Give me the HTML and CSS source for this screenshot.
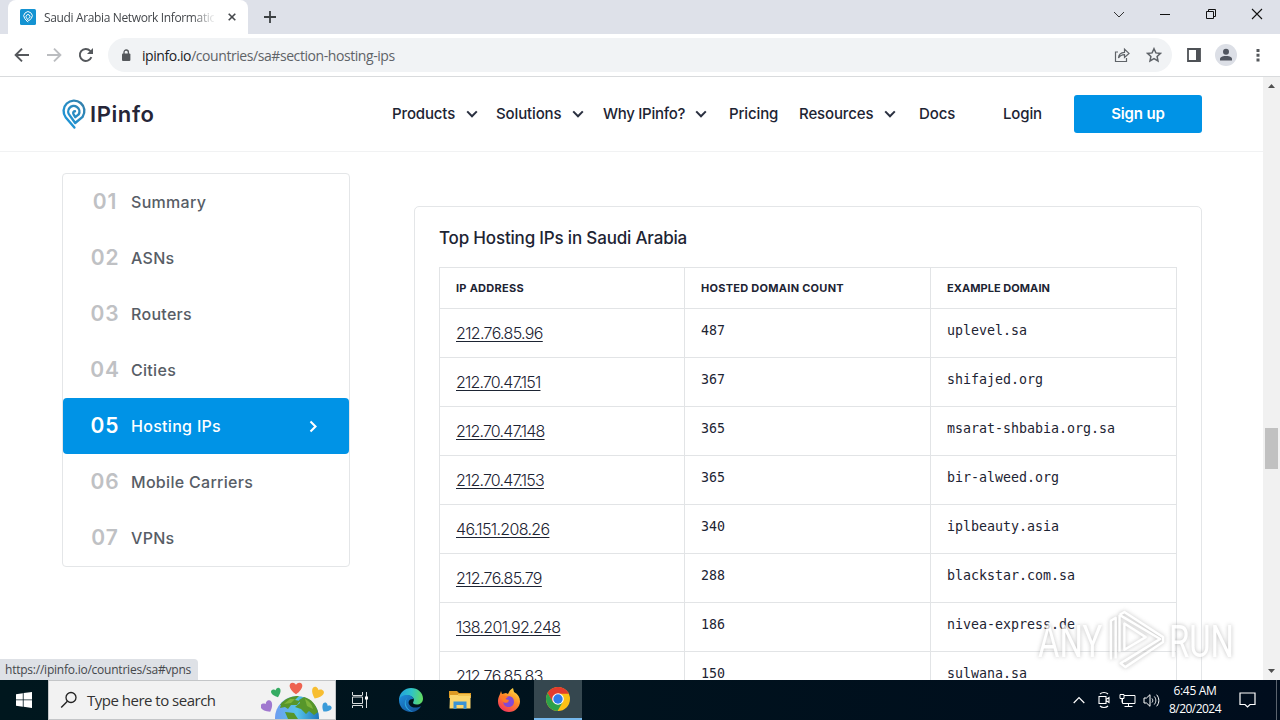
FILE: index.html
```html
<!DOCTYPE html>
<html lang="en">
<head>
    <meta charset="UTF-8">
    <meta name="viewport" content="width=device-width, initial-scale=1.0">
    <title>Saudi Arabia Network Information</title>
    <link rel="stylesheet" href="styles.css">
</head>
<body>
  <div class="tab-strip">
    <div class="tab">
      <svg class="favicon" width="16" height="16" viewBox="0 0 16 16"><rect width="16" height="16" rx="1.5" fill="#1493d2"/><path d="M8 13.2 4.8 9.6a4.2 4.2 0 1 1 6.6-.2L8.6 11.800 6.400 8.700a2 2 0 1 1 3.400-.2L8.400 9.400" fill="none" stroke="#fff" stroke-width="1"/></svg>
      <span class="tab-title">Saudi Arabia Network Information</span>
      <svg class="tab-close" width="8" height="8" viewBox="0 0 8 8"><path d="M.7.7l6.6 6.6M7.3.7L.7 7.3" stroke="#45484c" stroke-width="1.6"/></svg>
    </div>
    <svg class="new-tab" width="12" height="12" viewBox="0 0 12 12"><path d="M6 0v12M0 6h12" stroke="#3c4043" stroke-width="1.8"/></svg>
    <div class="window-buttons">
      <svg width="46" height="28" viewBox="0 0 46 28"><path d="M18 12l5 5 5-5" fill="none" stroke="#333"/></svg>
      <svg width="46" height="28" viewBox="0 0 46 28"><path d="M18 14.5h10" stroke="#111"/></svg>
      <svg width="46" height="28" viewBox="0 0 46 28"><path d="M18.5 11.5h7v7h-7zM20.5 11.5v-2h7v7h-2" fill="none" stroke="#111"/></svg>
      <svg width="46" height="28" viewBox="0 0 46 28"><path d="M18 9l10 10M28 9L18 19" stroke="#111" stroke-width="1.1"/></svg>
    </div>
  </div>

  <div class="toolbar">
    <svg class="tool-icon" width="16" height="16" viewBox="0 0 16 16"><path d="M15 8H2M8 1.6L1.6 8 8 14.4" fill="none" stroke="#55585c" stroke-width="1.9"/></svg>
    <svg class="tool-icon" width="16" height="16" viewBox="0 0 16 16"><path d="M1 8h13M8 1.6L14.4 8 8 14.4" fill="none" stroke="#bbbdc0" stroke-width="1.9"/></svg>
    <svg class="tool-icon" width="16" height="16" viewBox="0 0 16 16"><path d="M13.4 10.2A6 6 0 1 1 12.2 3.8L14 5.6" fill="none" stroke="#55585c" stroke-width="1.9"/><path d="M15 1v6H9z" fill="#55585c"/></svg>
    <div class="address-bar">
      <svg class="lock" width="10" height="13" viewBox="0 0 10 13"><rect x="1" y="4.5" width="8.4" height="7.5" rx="1" fill="#55585c"/><path d="M3 5V3.2a2.2 2.2 0 0 1 4.4 0V5" fill="none" stroke="#55585c" stroke-width="1.3"/></svg>
      <span class="url"><b>ipinfo.io</b>/countries/sa#section-hosting-ips</span>
      <svg class="share" width="16" height="16" viewBox="0 0 16 16"><path d="M4 5H1.5v9.5h11V11M4.5 11c.3-4 2.5-5.6 6-5.7V2.2L15 6.4l-4.500 4.100V7.700C7.800 7.700 6 8.600 4.500 11z" fill="none" stroke="#5f6368" stroke-width="1.2"/></svg>
      <svg class="star" width="16" height="16" viewBox="0 0 16 16"><path d="M8 1.7l1.9 4.2 4.6.5-3.4 3.1.9 4.5-4-2.300L4 14l.9-4.500L1.500 6.400l4.600-.5z" fill="none" stroke="#5f6368" stroke-width="1.5"/></svg>
    </div>
    <svg class="side-panel" width="14" height="14" viewBox="0 0 14 14"><path d="M1 1h12v12H1z" fill="none" stroke="#4e5156" stroke-width="1.8"/><path d="M9 1h4v12H9z" fill="#4e5156"/></svg>
    <svg class="profile" width="22" height="22" viewBox="0 0 22 22"><circle cx="11" cy="11" r="11" fill="#dcdfe6"/><circle cx="11" cy="7.8" r="3" fill="#50555f"/><path d="M5 16.500v-1.600C5 12.500 9 12 11 12s6 .5 6 2.900v1.600z" fill="#50555f"/></svg>
    <svg class="dots" width="4" height="14" viewBox="0 0 4 14"><path d="M.5 1h3v3h-3zM.5 5.700h3v3h-3zM.5 10.500h3v3h-3z" fill="#55585c"/></svg>
  </div>

  <div class="viewport">
    <div class="page">
      <header class="site-header">
        <div class="logo">
          <svg width="25" height="31" viewBox="0 0 25 31">
            <defs><linearGradient id="pin" x1="0" y1="1" x2="1" y2="0"><stop offset="0" stop-color="#1a9ae0"/><stop offset="1" stop-color="#357ea8"/></linearGradient></defs>
            <path d="M12.400 28.600 3.800 18.400A10.400 10.400 0 1 1 20.600 17.800L13.200 24 7.900 16.600A5.600 5.600 0 1 1 16.700 15.300L13.300 18.200 11.600 15.400C10.600 13.600 11.700 12.300 13 12.300" fill="none" stroke="url(#pin)" stroke-width="2.400" stroke-linejoin="round" stroke-linecap="round"/>
          </svg>
          <span class="logo-text">IPinfo</span>
        </div>
        <nav class="main-nav">
          <a>Products <svg class="chevron" viewBox="0 0 12 8"><path d="M1.2 1.4L6 6.3l4.800-4.900"/></svg></a>
          <a>Solutions <svg class="chevron" viewBox="0 0 12 8"><path d="M1.2 1.4L6 6.3l4.800-4.900"/></svg></a>
          <a class="why">Why IPinfo? <svg class="chevron" viewBox="0 0 12 8"><path d="M1.2 1.4L6 6.3l4.800-4.900"/></svg></a>
          <a>Pricing</a>
          <a>Resources <svg class="chevron" viewBox="0 0 12 8"><path d="M1.2 1.4L6 6.3l4.800-4.900"/></svg></a>
          <a>Docs</a>
          <a>Login</a>
          <a class="signup">Sign up</a>
        </nav>
      </header>

      <main class="content">
        <ul class="sections">
          <li><span class="num">01</span>Summary</li>
          <li><span class="num">02</span>ASNs</li>
          <li><span class="num">03</span>Routers</li>
          <li><span class="num">04</span>Cities</li>
          <li class="active"><span class="num">05</span>Hosting IPs
            <svg class="arrow" width="9" height="13" viewBox="0 0 9 13"><path d="M1.5 1.5l5 5-5 5" fill="none" stroke="#fff" stroke-width="2.1"/></svg>
          </li>
          <li><span class="num">06</span>Mobile Carriers</li>
          <li><span class="num">07</span>VPNs</li>
        </ul>

        <section class="card">
          <h2>Top Hosting IPs in Saudi Arabia</h2>
          <table>
            <thead>
              <tr><th class="th-ip">IP ADDRESS</th><th>HOSTED DOMAIN COUNT</th><th class="th-domain">EXAMPLE DOMAIN</th></tr>
            </thead>
            <tbody>
              <tr><td><a>212.76.85.96</a></td><td>487</td><td>uplevel.sa</td></tr>
              <tr><td><a class="narrow">212.70.47.151</a></td><td>367</td><td>shifajed.org</td></tr>
              <tr><td><a class="narrow">212.70.47.148</a></td><td>365</td><td>msarat-shbabia.org.sa</td></tr>
              <tr><td><a class="narrow">212.70.47.153</a></td><td>365</td><td>bir-alweed.org</td></tr>
              <tr><td><a>46.151.208.26</a></td><td>340</td><td>iplbeauty.asia</td></tr>
              <tr><td><a>212.76.85.79</a></td><td>288</td><td>blackstar.com.sa</td></tr>
              <tr><td><a>138.201.92.248</a></td><td>186</td><td>nivea-express.de</td></tr>
              <tr><td><a>212.76.85.83</a></td><td>150</td><td>sulwana.sa</td></tr>
            </tbody>
          </table>
        </section>
      </main>
    </div>

    <div class="scrollbar">
      <svg width="17" height="17" viewBox="0 0 17 17"><path d="M5 11l3.500-4 3.500 4z" fill="#505050"/></svg>
      <div class="thumb"></div>
      <svg width="17" height="17" viewBox="0 0 17 17"><path d="M5 6l3.500 4L12 6z" fill="#505050"/></svg>
    </div>

    <div class="status">https://ipinfo.io/countries/sa#vpns</div>
    <div class="watermark">
      <span>ANY</span>
      <svg width="60" height="66" viewBox="0 0 62 66"><path d="M5 52V12l5-3v42M14 6v38M14 6l42 25-37 23M14 6l5-3 40 26v5L20 60l-5-4 39-24M19 15v27l22-13z" fill="none" stroke="#fff" stroke-width="2.5" stroke-linejoin="round"/></svg>
      <span>RUN</span>
    </div>
  </div>

  <div class="taskbar">
    <div class="start">
      <svg width="16" height="16" viewBox="0 0 16 16"><path d="M0 2.2L6.800 1.200v6.300H0zM7.600 1.100L16 0v7.500H7.600zM0 8.300h6.800v6.400L0 13.800zM7.600 8.300H16V16l-8.400-1.200z" fill="#fff"/></svg>
    </div>
    <div class="search">
      <svg width="18" height="18" viewBox="0 0 18 18"><circle cx="11" cy="6.500" r="5" fill="none" stroke="#222" stroke-width="1.3"/><path d="M7.400 10.200L1.200 16.400" stroke="#222" stroke-width="1.4"/></svg>
      <span>Type here to search</span>
      <svg class="globe" width="74" height="38" viewBox="0 0 74 38">
        <defs>
          <linearGradient id="sea" x1="0" y1="0" x2="1" y2="0"><stop offset="0" stop-color="#6e9df0"/><stop offset=".5" stop-color="#58c4ea"/><stop offset="1" stop-color="#1e76bd"/></linearGradient>
          <path id="heart" d="M0 5.500C-8 0-7-5.500-3.300-5.500-1.200-5.500 0-3.500 0-3.500S1.200-5.500 3.300-5.500C7-5.500 8 0 0 5.500z"/>
        </defs>
        <circle cx="36" cy="37" r="22" fill="url(#sea)"/>
        <path d="M19 24c5-7 12-9 19-9l-4 4 5 1-3 4-6 0-3 4-3-2-5 1 1-3zM43 16c8 2 12 8 14 15l-4 3-5-4-3 3-5-5-6-2 5-4-1-3zM24 31l9 1 4 6H27z" fill="#57962a"/>
        <path d="M44 18c4 2 7 5 8 10l-6-3zM23 23l6-5 5 0-4 4z" fill="#7eb43a"/>
        <use href="#heart" transform="translate(35 7.500) scale(1.050)" fill="#ee6350"/>
        <use href="#heart" transform="translate(15.500 12) rotate(-20) scale(.8)" fill="#35ab62"/>
        <use href="#heart" transform="translate(56 12.500) rotate(25) scale(1)" fill="#f7bd2f"/>
        <use href="#heart" transform="translate(6.500 26) rotate(-30) scale(1)" fill="#a078cf"/>
        <use href="#heart" transform="translate(65 27) rotate(35) scale(.8)" fill="#3a9bd9"/>
      </svg>
    </div>
    <div class="task task-view">
      <svg width="18" height="16" viewBox="0 0 18 16"><path d="M1.500 0v3M11.500 0v3M1.500 3.500h10M1.500 5v6.500h10V5zM1.500 16v-2.500h10V16M15.500 0v16" fill="none" stroke="#d8dcdd"/><path d="M14 4.500h3v3h-3z" fill="#fff"/></svg>
    </div>
    <div class="task">
      <svg width="24" height="24" viewBox="0 0 24 24">
        <defs>
          <linearGradient id="edgeTop" x1="0" y1=".4" x2="1" y2=".5"><stop offset="0" stop-color="#22a0dc"/><stop offset=".5" stop-color="#2fc3c8"/><stop offset="1" stop-color="#62dc5f"/></linearGradient>
          <linearGradient id="edgeLow" x1="0" y1="0" x2="1" y2="1"><stop offset="0" stop-color="#1f8fdc"/><stop offset="1" stop-color="#114a8e"/></linearGradient>
        </defs>
        <path d="M0 11C1 4 6 0 12 0c7 0 12 5 12 10.500 0 4-3 6-6.300 6-3 0-4.200-1.200-3.500-2.300C16.500 10.500 13 7.500 9 7.500 4 7.500 1 10 0 13z" fill="url(#edgeTop)"/>
        <path d="M0 12c1-4 5-5.500 9-5 3 .2 5 2 5.500 4C10 10.500 8.500 14 10.500 17c2.500 3.500 8 3 11.500 1-2 4-6 6-10 6C5 24 0 19 0 12z" fill="url(#edgeLow)"/>
        <path d="M9 9c-4 3-3 12 5 14.700C6 23 3 14 9 9z" fill="#2aa7df"/>
      </svg>
    </div>
    <div class="task">
      <svg width="22" height="18" viewBox="0 0 22 18"><path d="M0 0h8l2 2h12v5H0z" fill="#dc9a24"/><path d="M1 4h20.500v13.500H.5z" fill="#fbd66d"/><path d="M4.500 10.500h13v7.500h-3v-4h-7v4h-3z" fill="#3a93d4"/><path d="M9 3h12v2H9z" fill="#f3c34f"/></svg>
    </div>
    <div class="task">
      <svg width="24" height="24" viewBox="0 0 24 24">
        <defs><linearGradient id="fox" x1=".8" y1="0" x2=".2" y2="1"><stop offset="0" stop-color="#ffe043"/><stop offset=".45" stop-color="#ff8a25"/><stop offset="1" stop-color="#f32e61"/></linearGradient></defs>
        <path d="M4 3l1 3 4-1 2 1c1-3 3-5 5-6l1 4c4 2 6 5.500 6 9.500C23 19 18 24 12 24S1 19.500 1 13.500C1 9 3 7 4 3z" fill="url(#fox)"/>
        <path d="M9 9c4-2 8 0 8 5 0 3-2.500 5-5.500 5S6 16.500 6.500 14c2 1.500 4 1 5.500-.5-3 0-4-2-3-4.500z" fill="#8349d5"/>
        <path d="M3 9c2-2 5-2 8 0l-3 2 4 1c-1 2-3 2.500-5.500 2z" fill="#ff7a26"/>
      </svg>
    </div>
    <div class="task running">
      <svg width="24" height="24" viewBox="0 0 24 24"><circle cx="12" cy="12" r="12" fill="#fbc116"/><path d="M1.600 6A12 12 0 0 1 22.400 6L23 6.700H12l-5.500 8.600z" fill="#e33b2e"/><path d="M1.600 6A12 12 0 0 0 11.500 24l5-8.500-9.500-.3z" fill="#2da14a"/><circle cx="12" cy="12" r="5.800" fill="#fff"/><circle cx="12" cy="12" r="4.700" fill="#2f7bea"/></svg>
    </div>
    <div class="tray">
      <svg width="12" height="8" viewBox="0 0 12 8"><path d="M.7 7L6 1.500 11.300 7" fill="none" stroke="#fff" stroke-width="1.2"/></svg>
      <svg class="camera" width="12" height="18" viewBox="0 0 12 18"><path d="M1 5.500h7v7H1zM8 8.500l3-2v5l-3-2M2 3c2-2 6-2 8 0M2 15c2 2 6 2 8 0" fill="none" stroke="#fff" stroke-width="1.1"/></svg>
      <svg class="network" width="17" height="15" viewBox="0 0 17 15"><path d="M5 2.500h11v8H3.500V6M9.500 10.500v3M5.500 13.500h8M1 1.500h4v4H1zM3 5.500v4" fill="none" stroke="#fff"/></svg>
      <svg class="volume" width="17" height="15" viewBox="0 0 17 15"><path d="M1 5h2.500L7 1.700v11.600L3.500 10H1z" fill="none" stroke="#fff"/><path d="M9 5.500c1 1.200 1 2.800 0 4M11.300 3.500c2 2.400 2 5.600 0 8M13.600 1.700c3 3.400 3 8.200 0 11.600" fill="none" stroke="#fff"/></svg>
      <div class="clock"><span class="time">6:45 AM</span><span class="date">8/20/2024</span></div>
      <svg class="notice" width="17" height="17" viewBox="0 0 17 17"><path d="M1 1h15v11.500h-5L8.500 15 6 12.500H1z" fill="none" stroke="#fff" stroke-width="1.2"/></svg>
      <div class="show-desktop"></div>
    </div>
  </div>
</body>
</html>
```
FILE: styles.css
```css
* {
  box-sizing: border-box;
}

body {
  margin: 0;
  width: 1280px;
  height: 720px;
  overflow: hidden;
  display: flex;
  flex-direction: column;
  font-family: "Open Sans", "Noto Sans", sans-serif;
  background: #fff;
}

svg {
  display: block;
  flex: none;
}

/* Browser window */
.tab-strip {
  display: flex;
  height: 34px;
  background: #dee1e9;
}

.tab {
  display: flex;
  align-items: center;
  width: 240px;
  margin-left: 8px;
  padding-left: 12px;
  background: #fff;
  border-radius: 8px 8px 0 0;
}

.tab-title {
  width: 170px;
  margin: 0 14px 0 8px;
  overflow: hidden;
  white-space: nowrap;
  font-size: 12px;
  letter-spacing: -0.36px;
  color: #45484c;
  -webkit-mask-image: linear-gradient(to right, #000 148px, transparent 172px);
  mask-image: linear-gradient(to right, #000 148px, transparent 172px);
}

.new-tab {
  margin: 11px 0 0 16px;
}

.window-buttons {
  display: flex;
  margin-left: auto;
}

.toolbar {
  display: flex;
  align-items: center;
  height: 43px;
  padding-left: 14px;
  background: #fff;
  border-bottom: 1px solid #d9dbdd;
}

.tool-icon {
  margin-right: 16px;
}

.address-bar {
  display: flex;
  align-items: center;
  width: 1064px;
  height: 34px;
  margin-left: -2px;
  padding: 0 10px 0 13px;
  background: #f1f3f5;
  border-radius: 17px;
}

.url {
  margin-left: 11px;
  font-size: 14px;
  letter-spacing: -0.43px;
  color: #5f6368;
}

.url b {
  font-weight: 400;
  color: #202124;
}

.share {
  margin-left: auto;
}

.star {
  margin-left: 16px;
}

.side-panel {
  margin-left: 15px;
}

.profile {
  margin-left: 14px;
}

.dots {
  margin-left: 19px;
}

/* Page */
.viewport {
  position: relative;
  display: flex;
  height: 603px;
}

.page {
  width: 1263px;
  height: 603px;
  overflow: hidden;
  font-family: Inter, "Liberation Sans", sans-serif;
  color: #1d2433;
}

.site-header {
  display: flex;
  align-items: center;
  height: 75px;
  padding: 0 61px 0 62px;
  border-bottom: 1px solid #f1f2f3;
}

.logo {
  display: flex;
  align-items: center;
  width: 330px;
}

.logo-text {
  margin: 0 0 1px 3px;
  font-size: 22px;
  font-weight: 600;
  letter-spacing: 0.6px;
  color: #262638;
}

.main-nav {
  display: grid;
  grid-template-columns: 104px 107px 126px 70px 120px 84px 71px 128px;
  align-items: center;
  font-size: 15px;
  font-weight: 500;
  letter-spacing: -0.13px;
}

.main-nav a {
  display: flex;
  align-items: center;
  padding-bottom: 1px;
}

.main-nav .why {
  letter-spacing: -0.29px;
}

.chevron {
  width: 12px;
  height: 8px;
  margin: 1px 0 0 11px;
  fill: none;
  stroke: #2a3040;
  stroke-width: 2;
}

.why .chevron {
  margin-left: 10px;
}

.main-nav .signup {
  justify-content: center;
  height: 38px;
  font-weight: 600;
  color: #fff;
  background: #0093e6;
  border-radius: 3px;
}

.content {
  display: flex;
  align-items: flex-start;
  padding: 21px 61px 0 62px;
}

.sections {
  width: 288px;
  margin: 0;
  padding: 0;
  list-style: none;
  border: 1px solid #e4e6e8;
  border-radius: 4px;
}

.sections li {
  display: flex;
  align-items: center;
  height: 56px;
  font-size: 16px;
  font-weight: 500;
  letter-spacing: 0.3px;
  color: #575d66;
}

.num {
  width: 30px;
  margin: 0 11px 2px 27px;
  text-align: center;
  font-size: 21px;
  font-weight: 600;
  letter-spacing: 0.9px;
  color: #bfc1c4;
}

.sections .active {
  color: #fff;
  background: #0093e6;
  border-radius: 4px;
}

.active .num {
  color: #fff;
}

.arrow {
  margin: 0 31px 0 auto;
}

.card {
  width: 788px;
  height: 600px;
  margin: 33px 0 0 64px;
  padding: 0 24px;
  border: 1px solid #e4e6e8;
  border-radius: 5px;
}

.card h2 {
  margin: 20px 0 17px;
  line-height: 23px;
  font-size: 17px;
  font-weight: 500;
  letter-spacing: -0.18px;
}

table {
  width: 738px;
  table-layout: fixed;
  border-collapse: collapse;
}

th, td {
  padding: 0 16px;
  border: 1px solid #e2e4e6;
  text-align: left;
}

th {
  height: 41px;
  font-size: 11px;
  font-weight: 700;
  letter-spacing: 0.27px;
}

.th-ip {
  width: 245px;
}

.th-domain {
  letter-spacing: 0.05px;
}

td {
  height: 49px;
  padding-bottom: 5px;
  font-family: "DejaVu Sans Mono", monospace;
  font-size: 13.3px;
}

td:first-child {
  padding-bottom: 1px;
  font-family: Inter, sans-serif;
  font-size: 16px;
  font-weight: 300;
}

td a {
  text-decoration: underline;
  text-underline-offset: 2px;
  letter-spacing: -0.66px;
}

td .narrow {
  letter-spacing: -0.82px;
}

.scrollbar {
  display: flex;
  flex-direction: column;
  justify-content: space-between;
  width: 17px;
  background: #f1f1f1;
}

.thumb {
  width: 13px;
  height: 41px;
  margin: 334px 2px auto;
  background: #c1c1c1;
}

.status {
  position: absolute;
  left: 0;
  bottom: 0;
  width: 198px;
  height: 21px;
  padding-left: 5px;
  line-height: 21px;
  font-size: 12px;
  letter-spacing: -0.23px;
  color: #44474b;
  background: #dee1e6;
  border-top-right-radius: 4px;
}

.watermark {
  position: absolute;
  left: 1038px;
  bottom: 6px;
  display: flex;
  align-items: center;
  gap: 3px;
  font-family: Roboto, sans-serif;
  font-size: 45px;
  color: #fff;
  opacity: 0.75;
  filter: drop-shadow(0 0 2px #aaa);
}

.watermark span {
  width: 65px;
  transform: scaleX(0.73);
  transform-origin: left;
}

/* Taskbar */
.taskbar {
  display: flex;
  height: 40px;
  background: linear-gradient(to right, #00171e, #000d1d);
}

.start {
  display: flex;
  align-items: center;
  justify-content: center;
  width: 48px;
}

.search {
  display: flex;
  align-items: center;
  width: 288px;
  padding-left: 11px;
  font-size: 15px;
  letter-spacing: -0.5px;
  color: #333;
  background: #f2f2f2;
  border: 1px solid #c4c6c8;
}

.search span {
  margin-left: 9px;
}

.globe {
  margin-left: auto;
}

.task {
  display: flex;
  align-items: center;
  justify-content: center;
  width: 49px;
}

.task-view {
  width: 50px;
  padding-right: 2px;
}

.running {
  width: 48px;
  margin-left: 1px;
  background: #35474f;
  border-bottom: 2px solid #76b9ed;
}

.tray {
  display: flex;
  align-items: center;
  margin-left: auto;
}

.camera {
  margin-left: 13px;
}

.network {
  margin-left: 9px;
}

.volume {
  margin-left: 7px;
}

.clock {
  display: flex;
  flex-direction: column;
  width: 54px;
  margin-left: 8px;
  align-items: center;
  line-height: 18px;
  font-size: 12px;
  color: #fff;
}

.time {
  letter-spacing: -0.32px;
}

.date {
  letter-spacing: -0.54px;
}

.notice {
  margin-left: 17px;
}

.show-desktop {
  width: 4px;
  height: 40px;
  margin-left: 20px;
  border-left: 1px solid #5a636d;
}
```
